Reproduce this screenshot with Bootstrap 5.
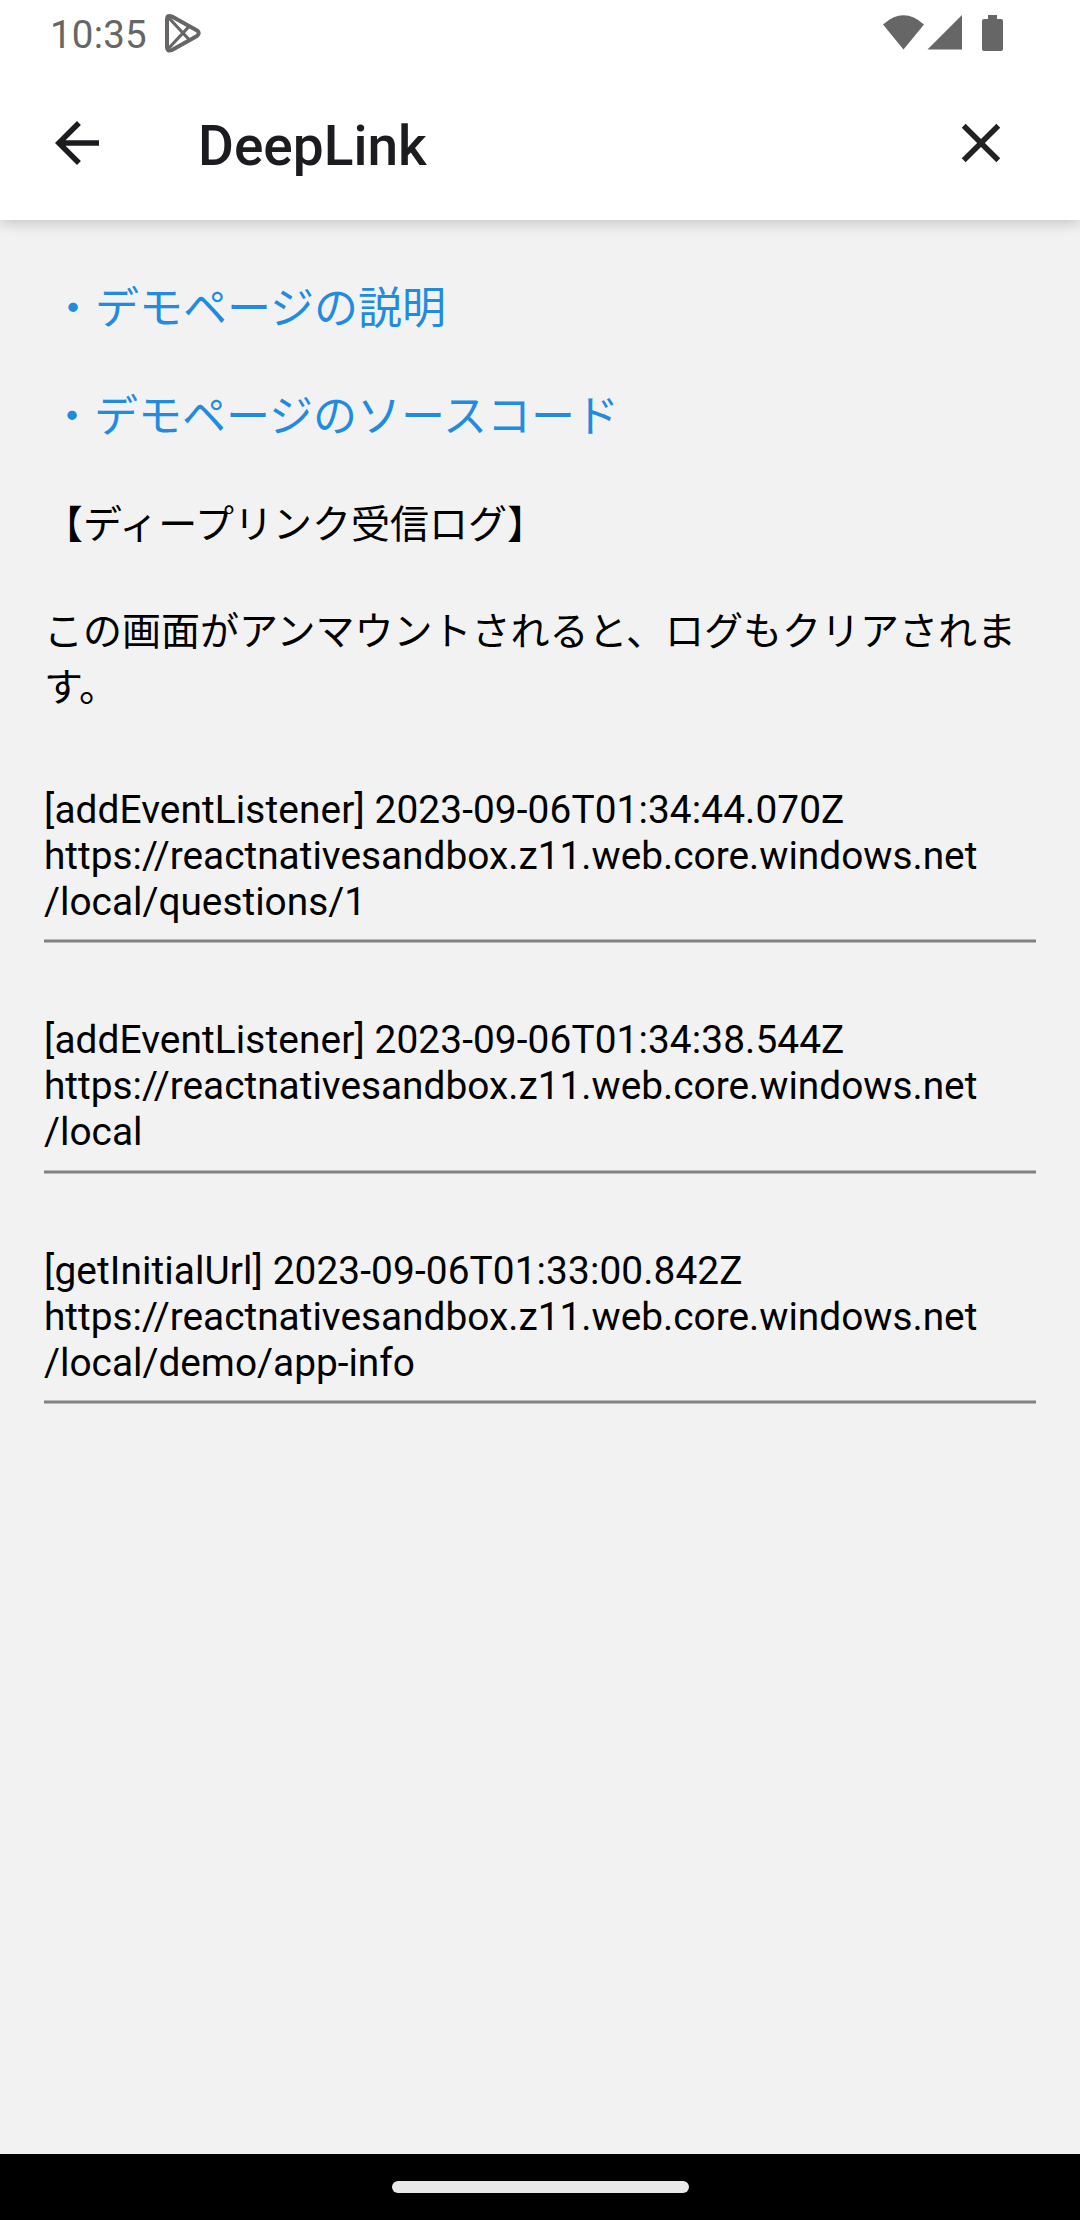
<!DOCTYPE html>
<html lang="ja">
<head>
<meta charset="utf-8">
<meta name="viewport" content="width=device-width, initial-scale=1">
<title>DeepLink</title>
<link href="https://cdn.jsdelivr.net/npm/bootstrap@5.3.0/dist/css/bootstrap.min.css" rel="stylesheet">
<style>
body { font-family: Roboto, "Noto Sans CJK JP", sans-serif; background: #f2f2f2; color: #000; height: 2220px; overflow: hidden; }
.status { height: 66px; padding: 0 76px 0 50px; color: #666; font-size: 38.5px; line-height: 69px; letter-spacing: .2px; }
.play-icon { margin: 12px 0 0 16px; }
.signal-icons { margin-top: 14px; }
.appbar { height: 154px; padding: 44px 66px 0 44px; color: #1c1b1f; }
.top-area { box-shadow: 0 3px 14px rgba(0,0,0,.2); z-index: 1; }
.screen-title { font-size: 55px; font-weight: 500; line-height: 64px; margin: 4px 0 0 88px; }
.page-body { padding: 57px 44px 0; }
.demo-link { color: #218cdf; font-size: 44px; line-height: 64px; height: 64px; margin-bottom: 44px; padding-left: 6px; }
.demo-link:first-child { padding-left: 7px; }
.jp-text { font-size: 39px; line-height: 56px; margin: 0; }
.log-title { margin-top: 4px; }
.log-note { margin: 51px 0 71px; }
.log-item { font-size: 38.8px; line-height: 46px; height: 155px; border-bottom: 2px solid #828282; box-shadow: 0 1px 0 #b9b9b9, inset 0 -1px 0 #b9b9b9; margin-bottom: 75px; }
.log-item.tall { height: 156px; }
.stamp { letter-spacing: .1px; }
.navbar-sys { height: 66px; }
.pill { width: 297px; height: 12px; background: #e9e9e9; }
</style>
<script src="https://cdn.jsdelivr.net/npm/bootstrap@5.3.0/dist/js/bootstrap.bundle.min.js"></script>
</head>
<body class="d-flex flex-column">
<div class="top-area bg-white position-relative">
  <div class="status d-flex align-items-start">
    <span>10:35</span>
    <svg class="play-icon" width="40" height="42" viewBox="0 0 40 42" fill="none" stroke="#666" stroke-width="4" stroke-linejoin="round"><path d="M4 7Q4 2.500 9 4.500L34 18.500Q37.500 21 34 24L9 38Q4 40 4 35Z"/><path stroke-width="3.200" d="M5 5L26.500 28M5 37L26.500 14"/></svg>
    <svg class="signal-icons ms-auto" width="121" height="38" viewBox="883 14 121 38" fill="#666"><path d="M883 24.500Q903.500 6 924 24.500L903.500 49.500ZM927.500 49.500L962 15V49.500ZM988 15H997V19H1001Q1003 19 1003 21V49Q1003 51 1001 51H984Q982 51 982 49V21Q982 19 984 19H988Z"/></svg>
  </div>
  <div class="appbar d-flex align-items-start">
    <svg width="66" height="66" viewBox="0 0 24 24" fill="currentColor"><path d="M20 11H7.830l5.590-5.590L12 4l-8 8 8 8 1.410-1.410L7.830 13H20v-2z"/></svg>
    <h1 class="screen-title">DeepLink</h1>
    <svg class="ms-auto" width="66" height="66" viewBox="0 0 24 24" fill="#222"><path d="M19 6.410L17.590 5 12 10.590 6.410 5 5 6.410 10.590 12 5 17.590 6.410 19 12 13.410 17.590 19 19 17.590 13.410 12z"/></svg>
  </div>
</div>
<main class="page-body flex-grow-1">
  <a class="demo-link d-block text-decoration-none" href="#">・デモページの説明</a>
  <a class="demo-link d-block text-decoration-none" href="#">・デモページのソースコード</a>
  <div class="d-flex flex-column">
    <p class="jp-text log-title">【ディープリンク受信ログ】</p>
    <p class="jp-text log-note">この画面がアンマウントされると、ログもクリアされま<br>す。</p>
  </div>
  <div class="log-item"><span class="stamp">[addEventListener] 2023-09-06T01:34:44.070Z</span><br>https://reactnativesandbox.z11.web.core.windows.net<br>/local/questions/1</div>
  <div class="log-item tall"><span class="stamp">[addEventListener] 2023-09-06T01:34:38.544Z</span><br>https://reactnativesandbox.z11.web.core.windows.net<br>/local</div>
  <div class="log-item"><span class="stamp">[getInitialUrl] 2023-09-06T01:33:00.842Z</span><br>https://reactnativesandbox.z11.web.core.windows.net<br>/local/demo/app-info</div>
</main>
<footer class="navbar-sys bg-black d-flex justify-content-center align-items-center">
  <div class="pill rounded-pill"></div>
</footer>
</body>
</html>
